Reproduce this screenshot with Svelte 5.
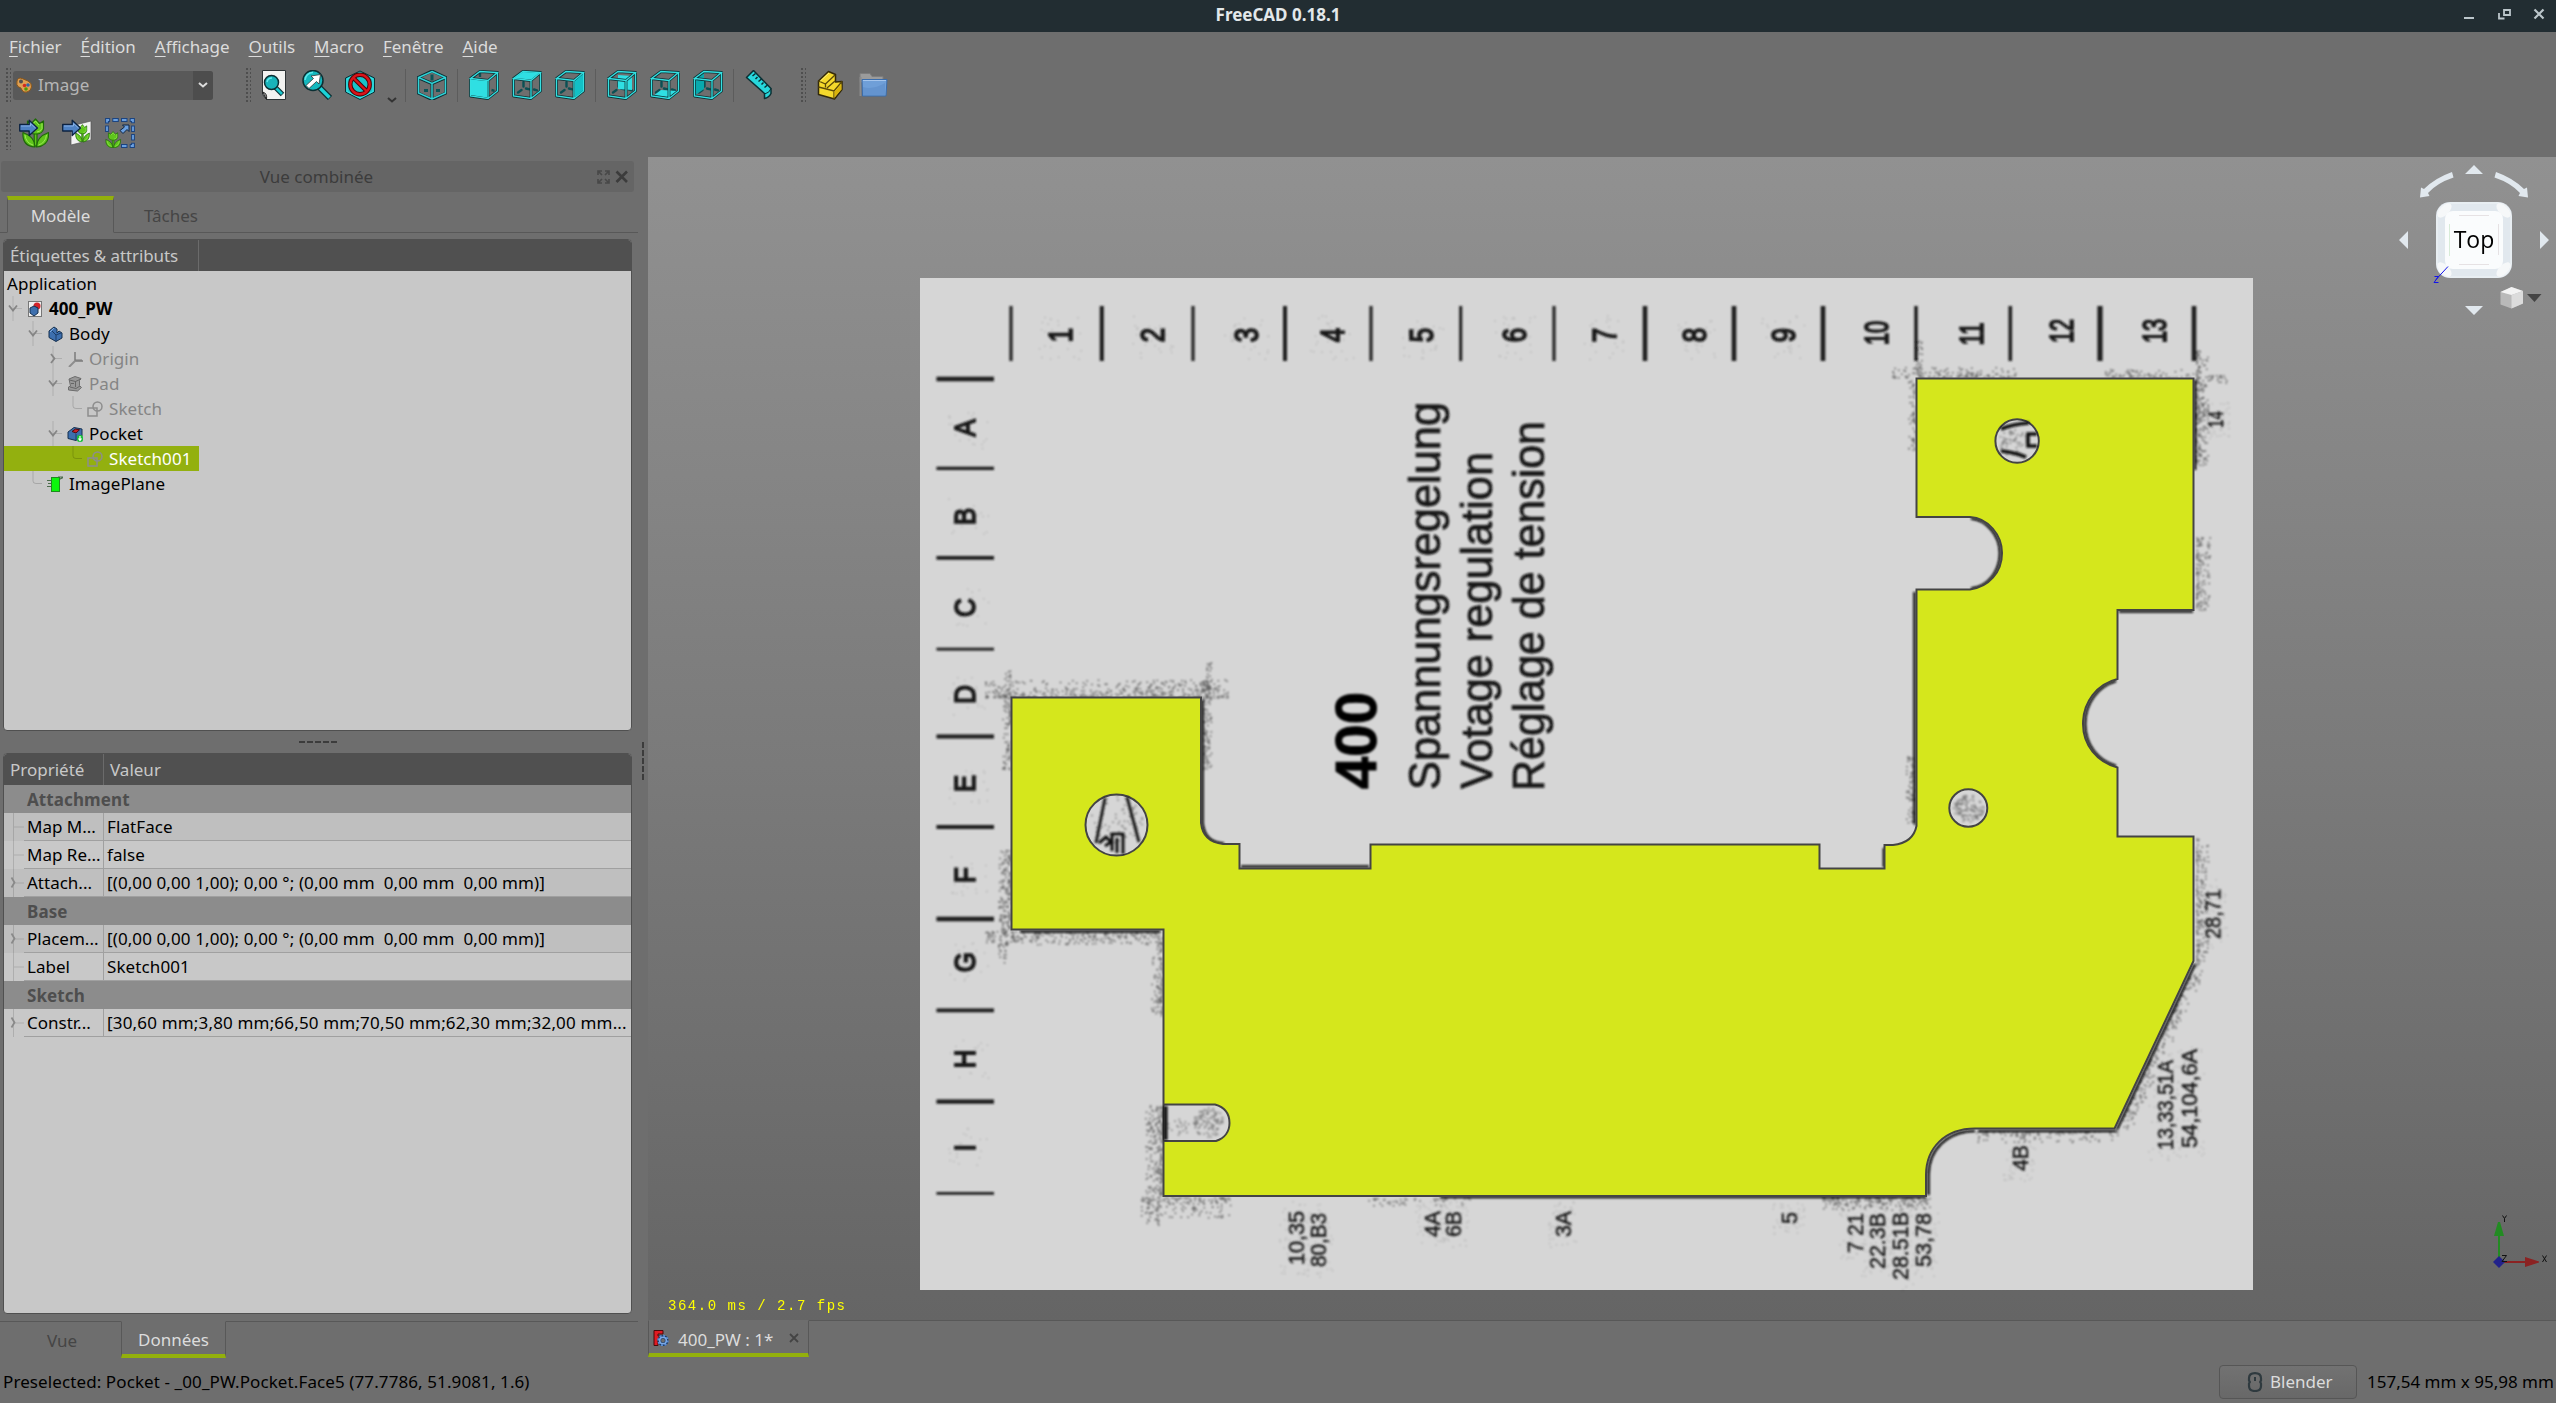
<script>
  const menus = ['Fichier', 'Édition', 'Affichage', 'Outils', 'Macro', 'Fenêtre', 'Aide'];

  const tree = [
    { label: 'Application', depth: 0, root: true },
    { label: '400_PW', depth: 0, icon: 'doc', arrow: 'down', bold: true },
    { label: 'Body', depth: 1, icon: 'body', arrow: 'down' },
    { label: 'Origin', depth: 2, icon: 'origin', arrow: 'right', dim: true },
    { label: 'Pad', depth: 2, icon: 'pad', arrow: 'down', dim: true },
    { label: 'Sketch', depth: 3, icon: 'sketch', dim: true },
    { label: 'Pocket', depth: 2, icon: 'pocket', arrow: 'down' },
    { label: 'Sketch001', depth: 3, icon: 'sketch', selected: true },
    { label: 'ImagePlane', depth: 1, icon: 'plane' }
  ];

  const vector = '[(0,00 0,00 1,00); 0,00 °; (0,00 mm  0,00 mm  0,00 mm)]';
  const props = [
    { group: 'Attachment' },
    { name: 'Map M...', value: 'FlatFace', alt: true },
    { name: 'Map Re...', value: 'false' },
    { name: 'Attach...', value: vector, alt: true, arrow: true },
    { group: 'Base' },
    { name: 'Placem...', value: vector, alt: true, arrow: true },
    { name: 'Label', value: 'Sketch001' },
    { group: 'Sketch' },
    { name: 'Constr...', value: '[30,60 mm;3,80 mm;66,50 mm;70,50 mm;62,30 mm;32,00 mm...', arrow: true, wide: true }
  ];

  const faces = {
    front: '1,8 19,10 19,29 1,26',
    top: '1,8 11,1 29,2 19,10',
    right: '19,10 29,2 29,21 19,29',
    rear: '11,5 25,6 25,20 11,19',
    bottom: '3,26 11,20 27,21 18,28',
    left: '1,9 11,3 11,19 1,26'
  };

  // Column and row scales printed on the board: tick positions and labels
  const colTicks = [[1011, 3.5], [1101.8, 4.5], [1193, 3.5], [1285, 4.5], [1371, 3.5], [1460.7, 3.5], [1554, 3.5], [1645, 5], [1734, 5], [1823, 5], [1916, 4], [2010.3, 4], [2100, 5.5], [2194, 5]];
  const colLabels = [['1', 1060.7], ['2', 1152.5], ['3', 1246], ['4', 1332], ['5', 1421], ['6', 1514.7], ['7', 1604], ['8', 1694], ['9', 1783]];
  const wideLabels = [['10', 1876, 333], ['11', 1971.5, 334], ['12', 2061, 331], ['13', 2154.5, 331]];
  const rowTicks = [[379, 5], [468.4, 4], [557.8, 4.5], [649.2, 3.5], [736.5, 4.5], [827, 4.5], [919, 5], [1010.3, 4.5], [1101.7, 5], [1193.3, 3.5]];
  const rowLabels = [['A', 428], ['B', 516.5], ['C', 607.6], ['D', 694.5], ['E', 783.5], ['F', 875], ['G', 962.3], ['H', 1059], ['I', 1147.7]];

  // [text, baseline x, bottom y, length]
  const pins = [
    ['10,35', 1304, 1265, 54], ['80,B3', 1326, 1267, 54],
    ['4A', 1440, 1237, 26], ['6B', 1461, 1237, 26], ['3A', 1571, 1237, 26],
    ['5', 1797, 1224, 12], ['7 21', 1863, 1253, 40], ['22.3B', 1885, 1269, 56],
    ['28.51B', 1908, 1280, 68], ['53,78', 1931, 1267, 54], ['4B', 2027.5, 1171, 26],
    ['13,33,51A', 2173, 1150, 90], ['54,104,6A', 2196.5, 1148, 99],
    ['28,71', 2220.5, 939, 50], ['14', 2223, 428, 17]
  ];

  const outline = 'M1011.5 697.5H1201V823Q1203 842 1223 844H1239.5V868.5H1370.5V844.5H1819.5V868.5H1884.5V845H1893Q1913 843 1916.5 826V589.5H1970C1989 587 2002 572 2002 553C2002 535 1988 518 1970 517H1916.5V378.5H2193.5V610H2117.5V679C2097 684 2083 702 2083 724C2083 745 2097 762 2117.5 767.5V836.5H2193.5V961L2114.5 1128.5H1975C1945 1128.5 1926 1148 1926 1175V1196H1163.5V929.5H1011.5Z';
  const holes = 'M1147.5 825a31 30.6 0 1 0-62 0a31 30.6 0 1 0 62 0ZM2038.8 441a21.7 21.7 0 1 0-43.4 0a21.7 21.7 0 1 0 43.4 0ZM1987.3 808a19 18.7 0 1 0-38 0a19 18.7 0 1 0 38 0ZM1163.5 1104.5H1215C1224 1107 1229.5 1113 1229.5 1123C1229.5 1131 1225 1138 1216 1141H1163.5Z';

  // Print speckle: bands [x1, y1, x2, y2, outward dx, outward dy, dots]
  const bands = [
    [985, 697, 1228, 697, 0, -18, 480], [1202, 680, 1202, 770, 9, 0, 140], [1206, 662, 1206, 700, 5, 0, 35],
    [1010, 670, 1010, 700, -6, 0, 25], [1010, 700, 1010, 770, -8, 0, 80], [1010, 850, 1010, 930, -12, 0, 160],
    [985, 931, 1160, 931, 0, 13, 320], [1006, 930, 1006, 966, -8, 0, 35],
    [1162, 935, 1162, 1015, -11, 0, 130], [1162, 1105, 1162, 1196, -17, 0, 240],
    [1140, 1197, 1230, 1197, 0, 20, 150], [1158, 1197, 1158, 1225, -12, 0, 40],
    [1892, 377, 2015, 377, 0, -10, 150], [2105, 377, 2193, 377, 0, -8, 80], [1916, 340, 1916, 378, 6, 0, 35],
    [1915, 380, 1915, 450, -7, 0, 70], [1915, 755, 1915, 825, -9, 0, 100],
    [2196, 350, 2196, 465, 12, 0, 220], [2196, 535, 2196, 610, 14, 0, 130],
    [2196, 838, 2196, 965, 12, 0, 180], [2194, 964, 2120, 1125, 11, 5, 220],
    [1975, 1131, 2118, 1131, 0, 11, 130], [1822, 1198, 1930, 1198, 0, 12, 180],
    [1365, 1198, 1480, 1198, 0, 7, 50], [2208, 375, 2226, 375, 0, 8, 20]
  ];
  const discs = [[1116, 818, 26, 24, 70], [2012, 441, 15, 14, 60], [1968, 808, 15, 14, 130], [1208, 1122, 15, 15, 120], [1178, 1126, 12, 8, 20]];

  let seed = 7;
  const rnd = () => (seed = (seed * 16807) % 2147483647) / 2147483647;
  const dot = (x, y) => `M${x.toFixed(1)} ${y.toFixed(1)}h1.5v1.5h-1.5z`;
  const grain = bands.map(([x1, y1, x2, y2, dx, dy, n]) => {
    let d = '';
    for (let i = 0; i < n; i++) {
      const t = rnd(), f = Math.pow(rnd(), 2);
      d += dot(x1 + (x2 - x1) * t + dx * f, y1 + (y2 - y1) * t + dy * f);
    }
    return d;
  }).join('');
  const holeGrain = discs.map(([cx, cy, rx, ry, n]) => {
    let d = '';
    for (let i = 0; i < n; i++) {
      const a = rnd() * 6.283, r = Math.sqrt(rnd());
      d += dot(cx + rx * r * Math.cos(a), cy + ry * r * Math.sin(a));
    }
    return d;
  }).join('');
  // Faint halo of compression noise round each printed label
  const halo = [...pins.map(([, x, y, l]) => [x - 9, y - l / 2, 16, l / 2 + 10, 50]), ...colLabels.map(([, x]) => [x, 337, 22, 22, 26]), ...rowLabels.map(([, y]) => [968, y, 20, 20, 20])]
    .map(([cx, cy, rx, ry, n]) => {
      let d = '';
      for (let i = 0; i < n; i++) d += dot(cx + rx * (2 * rnd() - 1), cy + ry * (2 * rnd() - 1));
      return d;
    }).join('');
</script>

{#snippet box(face)}
  <svg class="tool" viewBox="0 0 30 30">
    {#if face !== 'front'}
      <path d="M11.500 12v4.500M6 22.500l3.500-2.500M14 18.500l3.500 .8M22 19.500l3 .8" stroke="#0b5054" stroke-width="2.400" stroke-linecap="round" />
    {/if}
    <polygon points={faces[face]} fill={face === 'left' ? '#09a9ad' : face === 'right' ? '#12c0c6' : '#2fdfe3'} />
    {#if face === 'front'}<path d="M11 3v4M22.500 20l3 .8" stroke="#0b5054" stroke-width="2.400" />{/if}
    <path d="M1.500 8.500L11 1.500L28.500 2.500L19 10.500ZM1.500 8.500V26L19 28.500V10.500M19 28.500L28.500 21V2.500" fill="none" stroke="#0b2f33" stroke-width="2.800" stroke-linejoin="round" />
    <path d="M1.500 8.500L11 1.500L28.500 2.500L19 10.500ZM1.500 8.500V26L19 28.500V10.500M19 28.500L28.500 21V2.500" fill="none" stroke="#34e0e2" stroke-width="1.300" />
    {#if face === 'top'}<polygon points="2.500,8 11,2 27,3 19,9.500" fill="#2fdfe3" />{/if}
    {#if face === 'right'}<polygon points="20,11 28,4 28,20.500 20,27.500" fill="#12c0c6" />{/if}
    {#if face === 'front'}<polygon points="2,9.500 18,11 18,27.500 2,25" fill="#2fdfe3" />{/if}
  </svg>
{/snippet}

{#snippet tulip()}
  <g stroke="#1f6a08" stroke-width="1.200" stroke-linejoin="round">
    <path d="M15.200 14h2.800v14h-2.800z" fill="#5fc51b" />
    <path d="M4 14.500Q3 28 16 29Q16 19 4 14.500zM29.500 14.500Q30.500 28 17.500 29Q17.500 19 29.500 14.500z" fill="#5fc51b" />
    <path d="M8.500 3l4 2.500L16.500 1l4 4.500 4-2.500v8q-1 5-8 5t-8-5z" fill="#5fc51b" />
  </g>
  <path d="M13 7l3.500-4 3.500 4M23 5.500v5q-1 3-5 3.500M6 17q1 8 8 10M27.500 17q-1 8-8 10" fill="none" stroke="#9bea55" />
{/snippet}

{#snippet arrowBlue()}
  <path d="M.700 6.500h9.500V2.200L18.500 10l-8.300 7.500V13H.700z" fill="#4f82c4" stroke="#0d2342" stroke-width="1.300" stroke-linejoin="round" />
  <path d="M2 8h9.500V5.500L16.500 10" fill="none" stroke="#86b0e4" />
{/snippet}

{#snippet treeIcon(kind)}
  <svg class="ticon" viewBox="0 0 16 16">
    {#if kind === 'doc'}
      <rect x="1.500" y=".5" width="13" height="15" fill="#eee" stroke="#777" />
      <circle cx="10" cy="5" r="3.500" fill="#d3222a" />
      <path d="M3 7l4-2 4 2v5l-4 3-4-3z" fill="#3d6fae" stroke="#16304f" />
    {:else if kind === 'body'}
      <path d="M2 5l5-4 3 2v4l2-2 3 2v5l-6 3.500-7-4z" fill="#3d6fae" stroke="#16304f" />
      <path d="M5 5l4 4 5-2M9 9v6" fill="none" stroke="#1c3d68" /><path d="M3 6l4-4" stroke="#81aee2" />
    {:else if kind === 'origin'}
      <path d="M8 1v9M8 10h8M8 10l-6 6" fill="none" stroke="#8e8e8e" stroke-width="2" /><path d="M8 9h7" stroke="#777" />
    {:else if kind === 'pad'}
      <path d="M2 3l6-2.500 6 2-1.500 2v5l2 2-4 3.500-9-1v-3l2-1z" fill="#999" stroke="#6d6d6d" />
      <path d="M2.500 4l6 1.500L14 3M8.500 5v6M3 11l6 1.500 4-2.500M4 7.500h3" fill="none" stroke="#666" />
    {:else if kind === 'sketch'}
      <rect x="1" y="7" width="9" height="8" fill="none" stroke="#8d8d8d" stroke-width="1.500" />
      <circle cx="10.500" cy="5.500" r="4.500" fill="none" stroke="#8d8d8d" stroke-width="1.500" />
    {:else if kind === 'pocket'}
      <path d="M1 6l6-4.500 8 1.500v7l-6 4.500-8-2z" fill="#3d6fae" stroke="#16304f" />
      <path d="M5 5.500l3.500-2.500 4 .8L9 7z" fill="#c6202a" stroke="#4c0c10" /><path d="M9 8v6" stroke="#1c3d68" />
      <rect x="10" y="9" width="6" height="7" rx="2.500" fill="#18c038" /><path d="M13 10v4M11.500 12.500l1.500 2 1.500-2" fill="none" stroke="#fff" stroke-width="1.200" />
    {:else if kind === 'plane'}
      <path d="M0 4.500h5M1 7.500h4M0 10.500h5M11 1h5M12 3.500l4-2" stroke="#4b6b4b" stroke-width="1.200" />
      <rect x="4.500" y="1.500" width="8" height="14" fill="#0cf50c" stroke="#1f8a1f" />
    {/if}
  </svg>
{/snippet}

<div class="app">
  <header class="titlebar">
    <span></span>
    <strong>FreeCAD 0.18.1</strong>
    <svg class="winbtns" viewBox="0 0 90 32">
      <path d="M2 18h10" stroke="#bcc6cb" stroke-width="2" />
      <path d="M42.500 10h6v5h-6zM37.500 13v5.500h5.500" transform="translate(-.5 0)" fill="none" stroke="#bcc6cb" stroke-width="1.800" />
      <path d="M72.500 9.500l9 9M81.500 9.500l-9 9" stroke="#bcc6cb" stroke-width="2.200" />
    </svg>
  </header>

  <nav class="menubar">
    {#each menus as m}<span><u>{m[0]}</u>{m.slice(1)}</span>{/each}
  </nav>

  <div class="toolbar main-tools">
    <i class="grip"></i>
    <div class="combo">
      <svg viewBox="0 0 16 16" width="16" height="16">
        <path d="M1 4q1-4 5-2.500L12 4q4 2 3.500 6T11 15q-4 1-5-2T2.500 10Q0 8 1 4z" fill="#dfa053" stroke="#8a5517" />
        <circle cx="5" cy="4.500" r="2" fill="#505050" /><circle cx="8.500" cy="8.500" r="1.800" fill="#d22b20" /><circle cx="12" cy="8" r="1.800" fill="#3465a4" /><circle cx="10" cy="12" r="1.800" fill="#4e9a06" />
      </svg>
      <span>Image</span>
      <b><svg viewBox="0 0 10 6" width="10" height="6"><path d="M1 1l4 3.500L9 1" fill="none" stroke="#ddd" stroke-width="2" /></svg></b>
    </div>
    <i class="grip second"></i>
    <svg class="tool" viewBox="0 0 30 30">
      <path d="M3.500.5h23v29h-19l-4-5z" fill="#f3f3f1" stroke="#2e3436" /><path d="M3.500 22q5 1 4 7.500z" fill="#999" stroke="#222" />
      <path d="M15.500 16.500l8 8" stroke="#0b2f33" stroke-width="5" /><path d="M15.500 16.500l7.500 7.500" stroke="#1bc9cf" stroke-width="2.600" />
      <circle cx="12.500" cy="12.500" r="7" fill="#18b3ba" stroke="#0b2f33" stroke-width="1.500" /><path d="M8 12a5 5 0 0 1 5-4" fill="none" stroke="#5fe8ea" stroke-width="1.500" />
    </svg>
    <svg class="tool" viewBox="0 0 30 30">
      <path d="M17 17l11 11" stroke="#0b2f33" stroke-width="6" /><path d="M17 17l10.500 10.500" stroke="#1bd3d8" stroke-width="3.400" />
      <circle cx="11" cy="10.500" r="10" fill="#14b8be" stroke="#0b2f33" stroke-width="1.500" /><path d="M3 10a8 8 0 0 1 8-7.500" fill="none" stroke="#5fe8ea" stroke-width="1.500" />
      <path d="M4 15.500L11.500 8.500 9 6l9.500-1.500L17 14l-2.500-2.500L7 18.500z" fill="#fff" stroke="#333" stroke-width=".8" />
    </svg>
    <svg class="tool" viewBox="0 0 30 30">
      <path d="M15 1l14.500 7v14L15 29.500.500 22V8z" fill="#18c3c9" stroke="#0b2f33" /><path d="M15 2.500L28 9v12.500L15 28 2 21.500V9z" fill="none" stroke="#3ee6e8" />
      <circle cx="15" cy="14.500" r="9.700" fill="none" stroke="#4a0507" stroke-width="4.400" /><path d="M8 7.500l14 14" stroke="#4a0507" stroke-width="4.400" />
      <circle cx="15" cy="14.500" r="9.700" fill="none" stroke="#d8141a" stroke-width="2.400" /><path d="M8 7.500l14 14" stroke="#d8141a" stroke-width="2.400" />
    </svg>
    <svg class="caret" viewBox="0 0 10 6"><path d="M1 1l4 3.500L9 1" fill="none" stroke="#333" stroke-width="2" /></svg>
    <i class="sep"></i>
    <svg class="tool" viewBox="0 0 30 30">
      <path d="M15 4.500v6M7 20.500h4M19 20.500h4" stroke="#0b5458" stroke-width="3" />
      <path d="M15 1l14 6.500V23l-14 6.500L1 23V7.500zM1 7.500l14 6 14-6M15 13.500v16" fill="none" stroke="#0b2f33" stroke-width="3" stroke-linejoin="round" />
      <path d="M15 1.500l13.500 6V23L15 29 1.500 23V7.500zM1.500 7.500L15 13.500l13.500-6M15 13.500V29" fill="none" stroke="#2fd3d8" stroke-width="1.400" />
    </svg>
    <i class="sep"></i>
    {@render box('front')}{@render box('top')}{@render box('right')}
    <i class="sep"></i>
    {@render box('rear')}{@render box('bottom')}{@render box('left')}
    <i class="sep"></i>
    <svg class="tool" viewBox="0 0 30 30">
      <path d="M1.500 7.500l7-7 17.500 18v5q-2 4-6.500 5v-5z" fill="#27d8dd" stroke="#0b2f33" stroke-width="1.500" stroke-linejoin="round" />
      <path d="M19.500 24q5-1 6.500-5.500" fill="none" stroke="#0b2f33" /><path d="M7.500 6l3-2.500M10.500 9l2-2M13.500 11.500l3-2.500M16.500 14.500l2-2M19.500 17.500l3-2.500" stroke="#0b2f33" stroke-width="1.500" />
    </svg>
    <i class="grip third"></i>
    <svg class="tool" viewBox="0 0 30 30">
      <path d="M3.500 11l10-9.500 7 3V12l6.500-.5v8L19.500 29 3.500 24.500z" fill="#f5d92c" stroke="#33290a" stroke-width="1.500" stroke-linejoin="round" />
      <path d="M3.500 11l7 3 9.500-9M10.500 14v3.500M3.500 17l15.500 4 8-9.500M19 21v8M12 18l8-7" fill="none" stroke="#5c4a08" stroke-width="1.300" />
      <path d="M19.500 21.500L26.500 14v5.500l-7 8z" fill="#d9b30c" /><path d="M5.500 11L14 3" stroke="#fff27a" />
    </svg>
    <svg class="tool" viewBox="0 0 30 30">
      <path d="M2 3.500h10l2 3h11v6H2z" fill="#9b9b9b" stroke="#7d7d7d" /><path d="M2.500 7v19" stroke="#8b8b8b" stroke-width="2" />
      <path d="M4 9.500h25l-1 16.500H4.500z" fill="#6f9fd8" stroke="#3a6cab" /><path d="M5 10.500h23" stroke="#a5c5ec" /><path d="M5 17q10 3 22-4v12H5z" fill="#6494cf" />
    </svg>
  </div>

  <div class="toolbar image-tools">
    <i class="grip"></i>
    <svg class="tool" viewBox="0 0 30 30">{@render tulip()}{@render arrowBlue()}</svg>
    <svg class="tool" viewBox="0 0 30 30">
      <path d="M9 8l20-5v19L9 27z" fill="#f2f2f2" stroke="#555" stroke-width=".7" />
      <g transform="translate(11.500 6) scale(.54 .62)">{@render tulip()}</g>{@render arrowBlue()}
    </svg>
    <svg class="tool" viewBox="0 0 30 30">
      <path d="M16 28H28V2H2v12" fill="none" stroke="#1c4480" stroke-width="3.800" stroke-dasharray="6.500 2.200" />
      <path d="M16 28H28V2H2v12" fill="none" stroke="#6ba0e0" stroke-width="1.800" stroke-dasharray="4.500 4.200" stroke-dashoffset="-1" />
      <g transform="translate(-1.500 13) scale(.58)">{@render tulip()}</g>
      <path d="M15 12.500l4.500-3.500-2-2h6.500v6.500l-2-2-4 4z" fill="#6ba0e0" stroke="#0d2342" />
    </svg>
  </div>

  <main>
    <aside>
      <div class="dock-title">
        <span>Vue combinée</span>
        <svg viewBox="0 0 32 14" width="32" height="14">
          <path d="M1 5V1h4M8 1h4v4M12 9v4H8M5 13H1V9M1.500 1.500l3.500 3.500M11.500 1.500L8 5M11.500 12.500L8 9M1.500 12.500L5 9" fill="none" stroke="#484848" stroke-width="1.600" />
          <path d="M19.500 1.500l10.500 10.500M30 1.500L19.500 12" stroke="#3c3c3c" stroke-width="2.600" />
        </svg>
      </div>
      <div class="tabs top">
        <span class="edge"></span><span class="tab on">Modèle</span><span class="tab">Tâches</span><span class="rest"></span>
      </div>

      <section class="panel tree">
        <div class="phead"><span class="c0">Étiquettes &amp; attributs</span></div>
        <div class="tbody">
          {#each tree as n}
            <div class="trow d{n.depth}" class:root={n.root} class:sel={n.selected} class:dim={n.dim} class:bold={n.bold}>
              {#if !n.root}
                <svg class="branch" viewBox="0 0 20 25">
                  {#if n.arrow}
                    <path d="M10 0v25M10 12.500h9" stroke="#000" stroke-opacity={n.depth ? 0.13 : 0.1} />
                    {#if n.arrow === 'down'}<path d="M6 9.500l4 5 4-5" fill="none" stroke="#858585" stroke-width="1.800" />
                    {:else}<path d="M8 8l3.500 4.500L8 17" fill="none" stroke="#858585" stroke-width="1.800" />{/if}
                  {:else}
                    <path d="M10 0v10q0 2.500 3 2.500h6" fill="none" stroke="#000" stroke-opacity=".16" />
                  {/if}
                </svg>
                {@render treeIcon(n.icon)}
              {/if}
              <span>{n.label}</span>
            </div>
          {/each}
        </div>
      </section>

      <div class="hsplit"><i></i></div>

      <section class="panel props">
        <div class="phead"><span class="c1">Propriété</span><span class="c2">Valeur</span></div>
        <div class="tbody">
          {#each props as p}
            {#if p.group}
              <div class="prow group">{p.group}</div>
            {:else}
              <div class="prow" class:alt={p.alt}>
                <svg class="pbranch" viewBox="0 0 20 28">
                  <path d="M9.500 0v28M10 14h10" stroke="#000" stroke-opacity=".13" />
                  {#if p.arrow}<path d="M7.500 8.500l3 5-3 5" fill="none" stroke="#8a8a8a" stroke-width="1.800" />{/if}
                </svg>
                <span class="pname">{p.name}</span><span class="pval" class:wide={p.wide}>{p.value}</span>
              </div>
            {/if}
          {/each}
        </div>
      </section>

      <div class="tabs bottom">
        <span class="tab">Vue</span><span class="tab on">Données</span><span class="rest"></span>
      </div>
    </aside>

    <div class="vsplit"><i></i></div>

    <div class="mdi">
      <svg class="view" viewBox="648 157 1908 1163">
        <defs>
          <linearGradient id="bg" x1="0" y1="0" x2="0" y2="1"><stop offset="0" stop-color="#919191" /><stop offset="1" stop-color="#656565" /></linearGradient>
          <filter id="soft" x="-5%" y="-5%" width="110%" height="110%"><feGaussianBlur stdDeviation=".9" /></filter>
        </defs>
        <rect x="648" y="157" width="1908" height="1163" fill="url(#bg)" />
        <rect x="920" y="278" width="1333" height="1012" fill="#d6d6d6" />
        <g filter="url(#soft)">
          {#each colTicks as [x, w]}<path d="M{x} 306V361" stroke="#1c1c1c" stroke-width={w - 0.5} />{/each}
          {#each rowTicks as [y, w]}<path d="M936.500 {y}H994" stroke="#1c1c1c" stroke-width={w - 0.7} />{/each}
          <g class="scale">
            {#each colLabels as [t, x]}<text transform="translate({x + 11.5} 335) rotate(-90) scale(.78 1)">{t}</text>{/each}
            {#each wideLabels as [t, x, y]}<text transform="translate({x + 11.5} {y}) rotate(-90) scale(.66 1)">{t}</text>{/each}
          </g>
          <g class="rows">
            {#each rowLabels as [t, y]}<text transform="translate(974.5 {y}) rotate(-90) scale(.86 1)">{t}</text>{/each}
          </g>
          <text class="big" transform="translate(1376 789) rotate(-90)" textLength="97" lengthAdjust="spacingAndGlyphs">400</text>
          <g class="title">
            <text transform="translate(1440 790) rotate(-90)" textLength="388" lengthAdjust="spacingAndGlyphs">Spannungsregelung</text>
            <text transform="translate(1492 789) rotate(-90)" textLength="337" lengthAdjust="spacingAndGlyphs">Votage regulation</text>
            <text transform="translate(1544 791) rotate(-90)" textLength="370" lengthAdjust="spacingAndGlyphs">Réglage de tension</text>
          </g>
          <g class="pins">
            {#each pins as [t, x, y, l]}<text transform="translate({x} {y}) rotate(-90)" textLength={l} lengthAdjust="spacingAndGlyphs">{t}</text>{/each}
          </g>
          <path d={halo} fill="#000" fill-opacity=".13" />
          <path d={grain} fill="#000" fill-opacity=".55" />
          <path d="M1202.500 700V823Q1204.500 843 1224 843.500M1241 866.500H1369M1914.500 592V824M1884 848V867M1971 518.500C1986 519.500 2000 535 2000 553C2000 571 1988 587 1971 588.500M2119 611.500H2193M2116 681C2098 686 2085 703 2085 724C2085 745 2098 761 2116 766M2117 1129.500L2195 964M1978 1131H2116M1928.500 1195V1175C1928.500 1150 1947 1131 1975 1131M1440 1197H1926M1020 931.500H1160M2195 380V470" fill="none" stroke="#0a0a0a" stroke-width="2.600" />
        </g>
        <path d={outline + holes} fill="#d5e71c" fill-rule="evenodd" stroke="#444" stroke-width="2" />
        <g filter="url(#soft)">
          <path d={holeGrain} fill="#000" fill-opacity=".45" />
          <path d="M1105 798l-9 45M1127 797l12 45" stroke="#1a1a1a" stroke-width="3" />
          <path d="M1099 843l7-6 5 5-6 4M1112 851v-17h11v20M1117 838v15" fill="none" stroke="#111" stroke-width="3" />
          <path d="M2001 429q12-5 28-6M2001 451q12 1 25 6M2037 434h-9v12h9" fill="none" stroke="#111" stroke-width="3.600" />
          <path d="M1165.500 1106V1140" stroke="#0a0a0a" stroke-width="4" />
        </g>

        <g fill="#e1e8ee">
          <path d="M2465 174h18l-9-9zM2465 306h18l-9 9zM2408 231v18l-9-9zM2540 231v18l9-9z" />
          <path d="M2452 172l1.500 5.500Q2437 183 2428 193l1.500 3-9.500 1.500 1-10 3 1.500Q2435 178 2452 172z" />
          <path d="M2496 172l-1.500 5.500Q2511 183 2520 193l-1.500 3 9.500 1.500-1-10-3 1.500Q2513 178 2496 172z" />
          <rect x="2436" y="202" width="76" height="76" rx="14" />
        </g>
        <rect x="2437" y="203" width="74" height="74" rx="13" fill="none" stroke="#fff" stroke-opacity=".5" />
        <g fill="#f6f8f9">
          <ellipse cx="2444.500" cy="210.500" rx="9" ry="4.500" transform="rotate(-45 2444.500 210.500)" /><ellipse cx="2503.500" cy="210.500" rx="9" ry="4.500" transform="rotate(45 2503.500 210.500)" />
          <ellipse cx="2444.500" cy="269.500" rx="9" ry="4.500" transform="rotate(45 2444.500 269.500)" /><ellipse cx="2503.500" cy="269.500" rx="9" ry="4.500" transform="rotate(-45 2503.500 269.500)" />
          <rect x="2445" y="211" width="58" height="58" rx="8" fill="#fafcfd" />
        </g>
        <path d="M2459 215.500h30M2459 264.500h30M2498.500 224v31" stroke="#e6e2e4" /><path d="M2449.500 224v32" stroke="#d8ecd8" />
        <text class="face" x="2474" y="248">Top</text>
        <path d="M2434.500 276.500h4l-4.500 6h4.500M2436 279.500l12-13" fill="none" stroke="#1313e8" stroke-width="1" />
        <path d="M2500.500 292l11-5 11.500 4v12.500l-11.500 5-11-4z" fill="#b9b9b9" /><path d="M2500.500 292l11-5 11.500 4-11.500 4z" fill="#f3f3f3" /><path d="M2511.500 295l11.500-4v12.500l-11.500 5z" fill="#dcdcdc" />
        <path d="M2527 294h14.500l-7 8z" fill="#444" />

        <text class="fps" x="668" y="1310" textLength="177">364.0 ms / 2.7 fps</text>

        <path d="M2499 1262v-40" stroke="#228b22" stroke-width="2" /><path d="M2494 1236h10l-4-14h-2z" fill="#228b22" />
        <path d="M2499 1262h35" stroke="#8b2222" stroke-width="2" /><path d="M2525 1257v10l14-4.500v-1z" fill="#8b2222" />
        <path d="M2493 1262l6-6 6 6-6 6z" fill="#22228b" />
        <path d="M2502.500 1215.500l2 3 2-3M2504.500 1218.500v3.500M2502 1255.500h4.500l-4.500 6h5M2542.500 1255.500l4 6.500M2546.500 1255.500l-4 6.500" fill="none" stroke="#111" stroke-width="1" />
      </svg>
      <div class="tabs mditabs">
        <span class="tab on">
          <svg viewBox="0 0 16 16" width="16" height="16">
            <path d="M1 .5h9v3.500H5v2h3v3H5v6.500H1z" fill="#e01b22" stroke="#4a0808" />
            <circle cx="10" cy="10.500" r="3.700" fill="none" stroke="#1c3a66" stroke-width="3.600" /><circle cx="10" cy="10.500" r="4.800" fill="none" stroke="#5b8fd6" stroke-width="1.800" stroke-dasharray="2 1.700" /><circle cx="10" cy="10.500" r="3.300" fill="none" stroke="#7aa9e6" stroke-width="1.600" />
          </svg>
          <em>400_PW : 1*</em>
          <svg viewBox="0 0 10 10" width="10" height="10"><path d="M1 1l8 8M9 1L1 9" stroke="#444" stroke-width="1.800" /></svg>
        </span><span class="rest"></span>
      </div>
    </div>
  </main>

  <footer>
    <span class="msg">Preselected: Pocket - _00_PW.Pocket.Face5 (77.7786, 51.9081, 1.6)</span>
    <button>
      <svg viewBox="0 0 16 20" width="16" height="20"><path d="M8 1.200q6 0 6 5v2.300l-.8 1.500.8 1.500V14q0 5-6 5t-6-5v-2.500L2.800 10 2 8.500V6.200q0-5 6-5z" fill="none" stroke="#2f3a3f" stroke-width="2.200" /><path d="M8 5v4" stroke="#2f3a3f" stroke-width="2" /></svg>
      <span>Blender</span>
    </button>
    <span class="dims">157,54 mm x 95,98 mm</span>
  </footer>
</div>

<style>
  :global(body) { margin: 0; background: #6e6e6e; overflow: hidden; }
  .app { width: 2556px; height: 1403px; display: flex; flex-direction: column; background: #6e6e6e; font: 17px/24px 'Noto Sans', sans-serif; color: #dcdcdc; overflow: hidden; }
  .app * { box-sizing: border-box; }
  svg { display: block; flex: none; }

  .titlebar { height: 32px; background: #222d32; display: grid; grid-template-columns: 1fr auto 1fr; align-items: center; font-size: 17px; color: #e3e8ea; flex: none; }
  .titlebar strong { font-weight: 700; line-height: 28px; padding-bottom: 3px; }
  .winbtns { width: 90px; height: 32px; justify-self: end; margin-right: 4px; }

  .menubar { height: 32px; display: flex; align-items: center; gap: 19px; padding: 0 0 3px 9px; flex: none; letter-spacing: -.05px; }
  .menubar u { text-underline-offset: 3px; text-decoration-thickness: 1px; }

  .toolbar { display: flex; align-items: center; padding-left: 5px; flex: none; }
  .main-tools { height: 42px; }
  .image-tools { height: 54px; }
  .tool { width: 30px; height: 30px; margin-right: 13px; }
  .grip { flex: none; width: 6px; height: 37px; background: radial-gradient(circle, #4e4e4e 0 1px, transparent 1.3px) 0 0 / 4px 4px; }
  .main-tools .grip + .combo { margin-left: 2px; }
  .second { margin: 0 8px 0 32px; }
  .third { margin: 0 9px 0 12px; }
  .image-tools .grip { height: 34px; margin-right: 8px; }
  .combo { width: 200px; height: 29px; background: #595959; border-radius: 3px; display: flex; align-items: center; padding-left: 3px; color: #b5b5b5; }
  .combo span { margin-left: 6px; }
  .combo b { margin-left: auto; width: 20px; height: 29px; background: #4d4d4d; border-radius: 0 3px 3px 0; display: grid; place-items: center; }
  .caret { width: 10px; height: 6px; margin: 30px 8px 0 -1px; }
  .sep { flex: none; width: 1px; height: 33px; background: #5c5c5c; margin: 0 11px 0 0; }
  .tool + .sep { margin-left: -3px; }

  main { display: flex; height: 1200px; flex: none; }
  aside { width: 638px; display: flex; flex-direction: column; padding-top: 1px; }
  .dock-title { height: 31px; width: 633px; margin-left: 1px; background: #656565; border-radius: 3px; color: #3c3c3c; display: grid; grid-template-columns: 1fr auto 1fr; align-items: center; flex: none; }
  .dock-title span { grid-column: 2; margin-right: 2px; }
  .dock-title svg { justify-self: end; margin-right: 5px; }

  .tabs { display: flex; flex: none; color: #454545; }
  .tabs .tab { display: flex; align-items: center; justify-content: center; }
  .tabs .on { color: #dcdcdc; }
  .tabs .rest { flex: 1; }
  .top { height: 37px; margin-top: 4px; }
  .top .edge, .top .tab, .top .rest { border-bottom: 1px solid #585858; }
  .top .edge { width: 7px; }
  .top .tab { width: 107px; }
  .top .tab + .tab { width: 114px; padding-top: 3px; }
  .top .on { border: 1px solid #585858; border-top: 4px solid #93b00c; border-bottom-color: transparent; }

  .panel { margin-left: 3px; width: 629px; border: 1px solid #505050; border-radius: 4px; background: #c8c8c8; overflow: hidden; flex: none; }
  .phead { height: 32px; background: #505050; display: flex; color: #c8c8c8; line-height: 32px; }
  .tree { height: 492px; margin-top: 6px; }
  .tree .phead { height: 31px; line-height: 31px; }
  .c0 { width: 195px; padding-left: 6px; border-right: 1px solid #6b6b6b; letter-spacing: -.1px; }
  .c1 { width: 100px; padding-left: 6px; border-right: 1px solid #6b6b6b; }
  .c2 { padding-left: 6px; }
  .tbody { color: #000; }
  .trow { height: 25px; display: flex; align-items: center; width: 195px; }
  .trow.root { padding-left: 3px; }
  .trow span { letter-spacing: .05px; }
  .branch { width: 20px; height: 25px; margin-left: -1px; }
  .d1 .branch { margin-left: 19px; }
  .d2 .branch { margin-left: 39px; }
  .d3 .branch { margin-left: 59px; }
  .ticon { width: 16px; height: 16px; margin: 0 6px 0 4px; }
  .dim { color: #858585; }
  .bold { font-weight: 700; }
  .sel { background: #93b00f; color: #fff; }

  .hsplit { height: 22px; display: grid; place-items: center; flex: none; padding-right: 3px; }
  .hsplit i { width: 38px; height: 2px; background: repeating-linear-gradient(90deg, #3c3c3c 0 6px, transparent 6px 8px); }
  .props { height: 561px; }
  .props .phead { height: 31px; }
  .prow { height: 28px; display: flex; line-height: 28px; background: #c8c8c8; white-space: pre; }
  .prow.alt { background: #bfbfbf; }
  .prow.group { background: #8c8c8c; color: #4e4e4e; font-weight: 700; padding-left: 23px; line-height: 29px; letter-spacing: .1px; }
  .pbranch { width: 20px; height: 28px; }
  .pname { width: 80px; padding-left: 3px; border-right: 1px solid #a0a0a0; border-bottom: 1px solid #a0a0a0; }
  .pval { flex: 1; padding-left: 3px; border-bottom: 1px solid #a0a0a0; letter-spacing: .1px; }
  .pval.wide { letter-spacing: .17px; }

  .bottom { height: 37px; margin-top: 7px; }
  .bottom .tab, .bottom .rest { border-top: 1px solid #585858; }
  .bottom .tab { width: 121px; padding: 2px 0 0 3px; }
  .bottom .on { width: 105px; padding-left: 0; }
  .bottom .on, .mditabs .on { border: 1px solid #585858; border-top-color: transparent; border-bottom: 4px solid #93b00c; }
  .bottom .on { padding-top: 4px; }

  .vsplit { width: 10px; display: flex; justify-content: center; padding-top: 582px; }
  .vsplit i { width: 2px; height: 38px; background: repeating-linear-gradient(#3c3c3c 0 6px, transparent 6px 8px); }

  .mdi { flex: 1; display: flex; flex-direction: column; margin-top: -3px; }
  .view { width: 1908px; height: 1163px; }
  .mditabs { height: 37px; }
  .mditabs .rest { border-top: 1px solid #585858; }
  .mditabs .tab { width: 161px; justify-content: flex-start; padding: 2px 0 0 4px; }
  .mditabs em { font-style: normal; margin: 3px 16px 0 9px; white-space: nowrap; }

  .view text { font-family: 'Liberation Sans', sans-serif; fill: #141414; }
  .scale text { font-size: 33px; text-anchor: middle; stroke: #141414; stroke-width: 1.8px; }
  .rows text { font-size: 30px; text-anchor: middle; stroke: #141414; stroke-width: 1.8px; }
  .view .big { font-size: 57px; font-weight: 700; fill: #000; stroke: #000; stroke-width: 1px; }
  .title text { font-size: 44px; stroke: #141414; stroke-width: .7px; }
  .pins text { font-size: 22px; stroke: #2a2a2a; stroke-width: .6px; }
  .view .face { font-family: 'Open Sans', 'Noto Sans', sans-serif; font-size: 23px; text-anchor: middle; fill: #000; }
  .view .fps { font-family: 'Liberation Mono', monospace; font-size: 14px; fill: #ff0; }

  footer { flex: 1; display: flex; align-items: center; color: #000; padding-left: 3px; white-space: nowrap; }
  .msg { width: 2216px; letter-spacing: .1px; }
  footer button { width: 138px; height: 34px; margin: 0; padding: 0 0 0 27px; border: 1px solid #565656; border-radius: 4px; background: linear-gradient(#727272, #686868); color: #dcdcdc; font: inherit; display: flex; align-items: center; gap: 7px; flex: none; }
  .dims { margin-left: 10px; }
</style>
